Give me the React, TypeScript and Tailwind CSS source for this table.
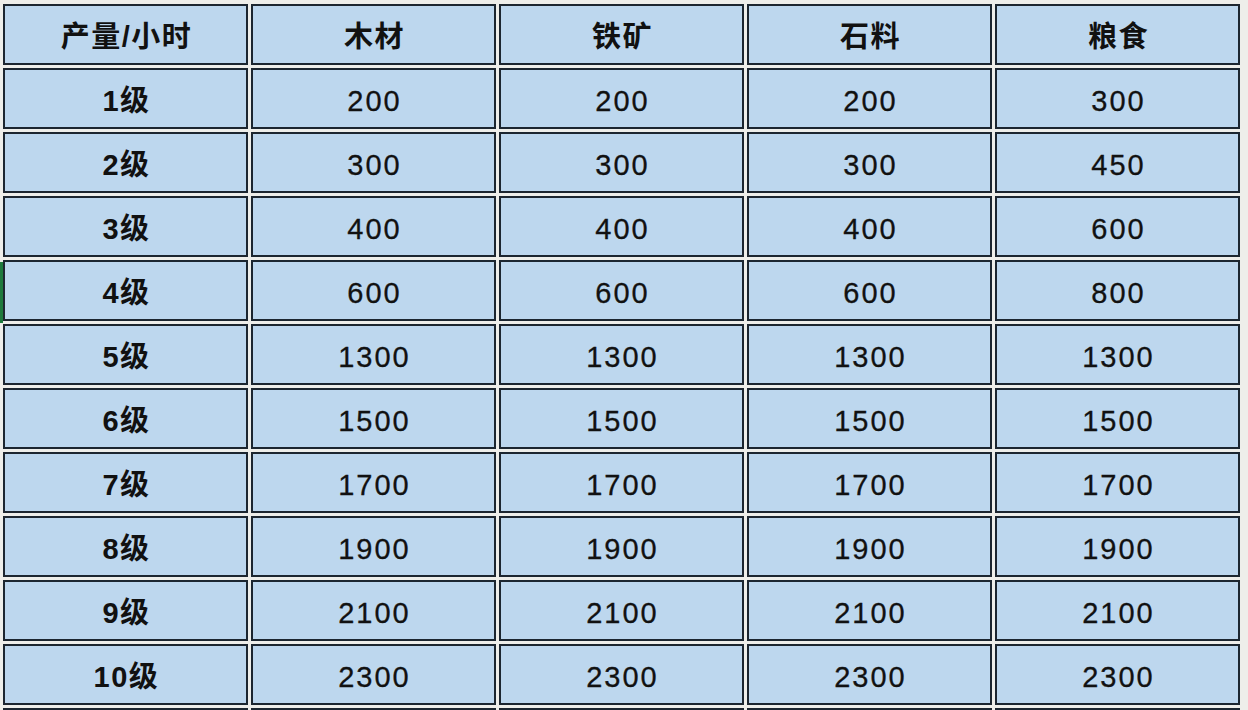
import React from "react";

const header = ["产量/小时", "木材", "铁矿", "石料", "粮食"];

const rows: [string, number, number, number, number][] = [
  ["1级", 200, 200, 200, 300],
  ["2级", 300, 300, 300, 450],
  ["3级", 400, 400, 400, 600],
  ["4级", 600, 600, 600, 800],
  ["5级", 1300, 1300, 1300, 1300],
  ["6级", 1500, 1500, 1500, 1500],
  ["7级", 1700, 1700, 1700, 1700],
  ["8级", 1900, 1900, 1900, 1900],
  ["9级", 2100, 2100, 2100, 2100],
  ["10级", 2300, 2300, 2300, 2300],
];

const font = { fontFamily: '"Liberation Sans", "Noto Sans CJK SC", sans-serif' };

function Cell({ children, bold }: { children?: React.ReactNode; bold?: boolean }) {
  return (
    <div
      className={[
        "h-[61px] pt-[6px] pl-[2px] flex items-center justify-center bg-[#bdd7ee] border-2 border-[#1c2630] text-[29px] text-[#111]",
        bold ? "font-bold tracking-[1.5px]" : "font-normal tracking-[2px] [-webkit-text-stroke:0.3px_#111]",
      ].join(" ")}
    >
      {children}
    </div>
  );
}

export default function App() {
  return (
    <div className="relative w-[1248px] h-[710px] overflow-hidden bg-[#eeeeea]" style={font}>
      {/* selected-row marker on the far left */}
      <div className="absolute left-0 top-[262px] w-[3px] h-[61px] bg-[#1e7a3c]" />
      <div className="pl-[3px] pt-[4px] grid grid-cols-[repeat(5,245px)] gap-[3px]">
        {header.map((h) => (
          <Cell key={h} bold>
            {h}
          </Cell>
        ))}
        {rows.map((r) => (
          <React.Fragment key={r[0]}>
            <Cell bold>{r[0]}</Cell>
            {r.slice(1).map((v, i) => (
              <Cell key={i}>{v}</Cell>
            ))}
          </React.Fragment>
        ))}
        {[0, 1, 2, 3, 4].map((i) => (
          <Cell key={"e" + i} />
        ))}
      </div>
    </div>
  );
}
